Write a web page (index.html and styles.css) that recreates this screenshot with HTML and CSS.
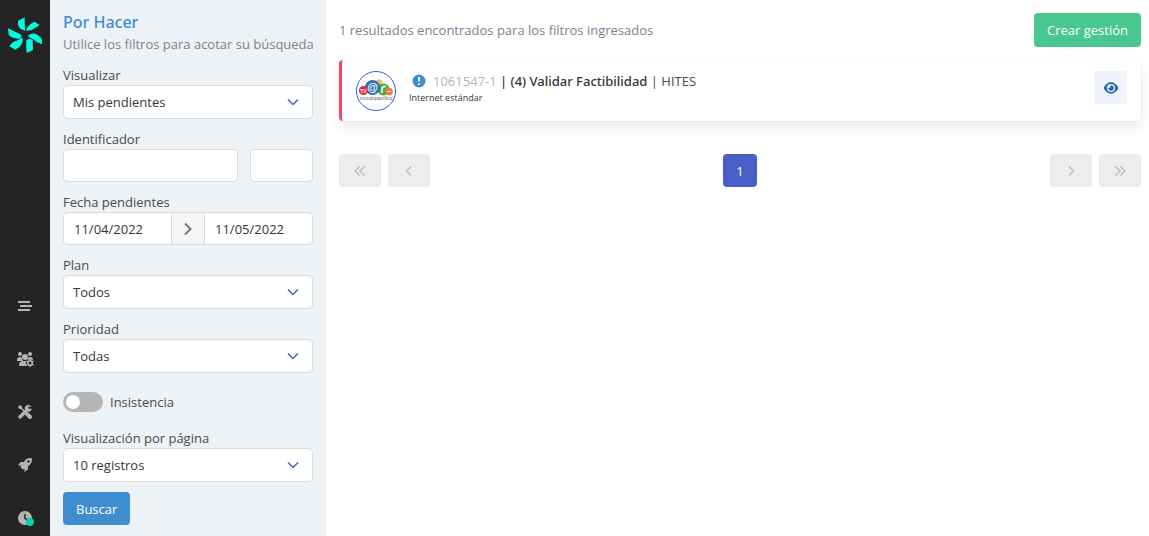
FILE: index.html
```html
<!DOCTYPE html>
<html lang="es">
<head>
    <meta charset="UTF-8">
    <meta name="viewport" content="width=device-width, initial-scale=1.0">
    <title>Por Hacer</title>
    <link rel="stylesheet" href="styles.css">
</head>
<body>
    <nav class="sidebar">
        <a href="#" class="brand" aria-label="Inicio">
            <svg viewBox="24 26 102 108" width="34" height="36" fill="#00fce0">
                <path d="M54 38 74 27 75 67 64 63Q52 56 54 38Z"/>
                <path d="M79 68Q79 52 103 40L119 50 95 65Q86 67 79 68Z"/>
                <path d="M83 83Q96 70 112 79 123 86 126 94V108L112 102Q101 92 90 88Z"/>
                <path d="M79 96Q88 89 98 95L99 125 80 134Q77 112 79 96Z"/>
                <path d="M67 87Q74 110 46 124L28 114Q35 101 50 97 61 93 67 87Z"/>
                <path d="M24 60 48 72Q62 76 65 84L60 91Q36 91 26 79Z"/>
            </svg>
        </a>
        <div class="menu">
            <a href="#" class="menu-item" aria-label="Lista">
                <svg viewBox="0 0 16 16" width="16" height="16" stroke="#b5b5b5" stroke-width="2">
                    <path d="M1 4h12M3 8h12M1 12h12"/>
                </svg>
            </a>
            <a href="#" class="menu-item" aria-label="Usuarios">
                <svg viewBox="0 0 18 16" width="18" height="16" fill="#b5b5b5">
                    <circle cx="4" cy="3" r="2"/>
                    <circle cx="14" cy="3" r="2"/>
                    <circle cx="9" cy="6" r="3"/>
                    <path d="M1 9Q1 6 4 6 5 6 6 7 6 9 7 10H1ZM17 9Q17 6 14 6 13 6 12 7 12 8 11 9 13 8 17 9ZM3 15Q3 10 7 10H10Q9 13 11 15Z"/>
                    <circle cx="14" cy="12" r="2.3" fill="none" stroke="#b5b5b5" stroke-width="1.6"/>
                    <path d="M13.3 8h1.4v2h-1.4zM13.3 14h1.4v2h-1.4zM10 10.6l.7-1.2 1.8 1-.7 1.2zM15.5 13.6l.7-1.2 1.8 1-.7 1.2zM10 13.4l1.8-1 .7 1.2-1.8 1zM15.5 10.4l1.8-1 .7 1.2-1.8 1z"/>
                </svg>
            </a>
            <a href="#" class="menu-item" aria-label="Herramientas">
                <svg viewBox="0 0 16 16" width="16" height="16" fill="none" stroke="#b5b5b5">
                    <path d="M3 13 10 6" stroke-width="3.4" stroke-linecap="round"/>
                    <path d="M13.9 2.6A3.2 3.2 0 1 0 14.4 4.9L12 5.2 11 4.2 11.4 2Z" fill="#b5b5b5" stroke-width=".6"/>
                    <path d="M1 3 3 1 5 2.5V4L7.8 6.8 6.8 7.8 4 5H2.5Z" fill="#b5b5b5" stroke="none"/>
                    <path d="M10.3 10.3 13 13" stroke-width="4" stroke-linecap="round"/>
                </svg>
            </a>
            <a href="#" class="menu-item" aria-label="Despegue">
                <svg viewBox="0 0 16 16" width="16" height="16">
                    <path d="M14.8 1.2Q9.5.4 6.8 5H4Q2.8 5.2 1 8.6L4.2 8.5 3.5 10.2 5.8 12.5 7.5 11.8 7.4 15Q10.8 13.2 11 12V9.2Q15.6 6.5 14.8 1.2Z" fill="#b5b5b5"/>
                    <circle cx="11.5" cy="4.5" r="1.2" fill="#242424"/>
                </svg>
            </a>
            <a href="#" class="menu-item" aria-label="Pendientes">
                <svg viewBox="0 0 16 16" width="16" height="16">
                    <circle cx="8" cy="8" r="7" fill="#b5b5b5"/>
                    <path d="M8 4v4.3l2.6 2" fill="none" stroke="#242424" stroke-width="1.5"/>
                </svg>
                <span class="menu-dot"></span>
            </a>
        </div>
    </nav>

    <form class="filters">
        <h1 class="filters-title">Por Hacer</h1>
        <p class="filters-subtitle">Utilice los filtros para acotar su búsqueda</p>

        <div class="field">
            <label for="visualizar">Visualizar</label>
            <div class="select">
                <select id="visualizar"><option>Mis pendientes</option></select>
                <svg class="chevron" viewBox="0 0 12 8" width="12" height="8"><path d="M1 1.5 6 6.5 11 1.5"/></svg>
            </div>
        </div>

        <div class="field">
            <label for="identificador">Identificador</label>
            <div class="id-group">
                <input type="text" class="input" id="identificador">
                <input type="text" class="input" aria-label="Dígito">
            </div>
        </div>

        <div class="field">
            <label for="desde">Fecha pendientes</label>
            <div class="date-group">
                <input type="text" class="input" id="desde" value="11/04/2022">
                <span class="date-arrow">
                    <svg viewBox="0 0 8 14" width="8" height="14"><path d="M1 1.5 6.5 7 1 12.5"/></svg>
                </span>
                <input type="text" class="input" aria-label="Hasta" value="11/05/2022">
            </div>
        </div>

        <div class="field">
            <label for="plan">Plan</label>
            <div class="select">
                <select id="plan"><option>Todos</option></select>
                <svg class="chevron" viewBox="0 0 12 8" width="12" height="8"><path d="M1 1.5 6 6.5 11 1.5"/></svg>
            </div>
        </div>

        <div class="field">
            <label for="prioridad">Prioridad</label>
            <div class="select">
                <select id="prioridad"><option>Todas</option></select>
                <svg class="chevron" viewBox="0 0 12 8" width="12" height="8"><path d="M1 1.5 6 6.5 11 1.5"/></svg>
            </div>
        </div>

        <div class="switch-field">
            <input type="checkbox" class="switch" id="insistencia">
            <label for="insistencia">Insistencia</label>
        </div>

        <div class="field">
            <label for="registros">Visualización por página</label>
            <div class="select">
                <select id="registros"><option>10 registros</option></select>
                <svg class="chevron" viewBox="0 0 12 8" width="12" height="8"><path d="M1 1.5 6 6.5 11 1.5"/></svg>
            </div>
        </div>

        <button type="button" class="btn btn-info">Buscar</button>
    </form>

    <main class="content">
        <div class="toolbar">
            <p class="results">1 resultados encontrados para los filtros ingresados</p>
            <button type="button" class="btn btn-success">Crear gestión</button>
        </div>

        <article class="card">
            <div class="avatar">
                <svg viewBox="0 0 38 38" width="38" height="38">
                    <circle cx="22" cy="11" r="3.6" fill="#f5bd62"/>
                    <circle cx="26.5" cy="17.5" r="6" fill="#43ad45"/>
                    <circle cx="15.5" cy="15.5" r="7.5" fill="#2670b8"/>
                    <circle cx="6.5" cy="18.5" r="4.6" fill="#e8283c"/>
                    <circle cx="32" cy="19.5" r="3.8" fill="#f0783a"/>
                    <g fill="#fff" font-family="Liberation Sans, sans-serif" font-weight="bold" text-anchor="middle">
                        <text x="6.5" y="20.5" font-size="5">TV</text>
                        <text x="15.5" y="19" font-size="11">@</text>
                    </g>
                    <path d="M25 21V17Q25.5 14 29 14.5" fill="none" stroke="#fff" stroke-width="1.6"/>
                    <path d="M30 19.5h4" stroke="#fff"/>
                    <text x="19" y="28" font-size="5" font-family="Liberation Sans, sans-serif" fill="#666" text-anchor="middle">mundopacífico</text>
                </svg>
            </div>
            <div class="card-body">
                <div class="card-title">
                    <svg class="alert-icon" viewBox="0 0 14 14" width="14" height="14">
                        <circle cx="7" cy="7" r="6.5" fill="#3e8ed0"/>
                        <path d="M7 3v4.5M7 9.2v1.8" stroke="#fff" stroke-width="1.7"/>
                    </svg>
                    <span><span class="card-id">1061547-1</span> <strong>| (4) Validar Factibilidad</strong> | HITES</span>
                </div>
                <div class="card-plan">Internet estándar</div>
            </div>
            <button type="button" class="btn btn-view" aria-label="Ver">
                <svg viewBox="0 0 16 14" width="16" height="14">
                    <path d="M.5 7Q3.5 1.3 8 1.3T15.5 7Q12.5 12.7 8 12.7T.5 7Z" fill="#2468b0"/>
                    <circle cx="8" cy="7" r="4" fill="#eff3fb"/>
                    <path d="M8 4.3A2.7 2.7 0 1 1 5.3 7Q7.8 7.5 8 4.3Z" fill="#2468b0"/>
                </svg>
            </button>
        </article>

        <nav class="pagination" aria-label="Paginación">
            <button type="button" class="page-btn" aria-label="Primera" disabled>
                <svg viewBox="0 0 12 12" width="12" height="12"><path d="M5.5 1.5 1 6 5.5 10.5M10.5 1.5 6 6 10.5 10.5"/></svg>
            </button>
            <button type="button" class="page-btn" aria-label="Anterior" disabled>
                <svg viewBox="0 0 12 12" width="12" height="12"><path d="M8 1.5 3.5 6 8 10.5"/></svg>
            </button>
            <button type="button" class="page-btn current">1</button>
            <button type="button" class="page-btn" aria-label="Siguiente" disabled>
                <svg viewBox="0 0 12 12" width="12" height="12"><path d="M4 1.5 8.5 6 4 10.5"/></svg>
            </button>
            <button type="button" class="page-btn" aria-label="Última" disabled>
                <svg viewBox="0 0 12 12" width="12" height="12"><path d="M1.5 1.5 6 6 1.5 10.5M6.5 1.5 11 6 6.5 10.5"/></svg>
            </button>
        </nav>
    </main>
</body>
</html>
```
FILE: styles.css
```css
:root {
    --dark: #242424;
    --panel: #edf2f7;
    --text: #4a4a4a;
    --text-strong: #363636;
    --muted: #7a8290;
    --border: #dbdbdb;
    --info: #3e8ed0;
    --link: #485fc7;
    --success: #48c78e;
    --danger: #f14668;
    --font: "Segoe UI", "Open Sans", sans-serif;
    --font-medium: "Segoe UI", "Noto Sans", sans-serif;
}

* {
    box-sizing: border-box;
    margin: 0;
    padding: 0;
}

body {
    display: flex;
    min-height: 100vh;
    background: #fff;
    color: var(--text);
    font-family: var(--font);
    font-size: 13px;
    line-height: 20px;
}

input,
select,
button {
    font: inherit;
    color: inherit;
}

svg {
    display: block;
    flex: none;
}

/* Sidebar */

.sidebar {
    display: flex;
    flex-direction: column;
    justify-content: space-between;
    align-items: center;
    flex: none;
    width: 50px;
    padding: 17px 0 10px;
    background: var(--dark);
}

.menu {
    display: flex;
    flex-direction: column;
    gap: 37px;
}

.menu-item {
    position: relative;
    display: flex;
    justify-content: center;
}

.menu-dot {
    position: absolute;
    right: 0;
    bottom: 0;
    width: 8px;
    height: 8px;
    border-radius: 50%;
    background: #00d1b2;
}

/* Filters */

.filters {
    flex: none;
    width: 276px;
    padding: 11px 13px;
    background: var(--panel);
}

.filters-title {
    color: var(--info);
    font-family: var(--font-medium);
    font-size: 16px;
    font-weight: 500;
    line-height: 23px;
}

.filters-subtitle {
    margin-bottom: 11px;
    color: var(--muted);
    white-space: nowrap;
}

.field {
    margin-bottom: 10px;
}

.field label {
    display: block;
}

.input,
.select select {
    width: 100%;
    height: 33px;
    padding: 0 10px;
    border: 1px solid var(--border);
    border-radius: 4px;
    background: #fff;
    color: var(--text-strong);
}

.select {
    display: grid;
    align-items: center;
}

.select select {
    grid-area: 1 / 1;
    height: 34px;
    padding: 0 9px;
    appearance: none;
}

.chevron {
    grid-area: 1 / 1;
    justify-self: end;
    margin-right: 14px;
    fill: none;
    stroke: var(--link);
    stroke-width: 1.5;
    pointer-events: none;
}

.id-group {
    display: grid;
    grid-template-columns: 175px 1fr;
    gap: 12px;
}

.date-group {
    display: flex;
}

.date-group .input {
    flex: 1;
    min-width: 0;
}

.date-group .input:first-child {
    border-radius: 4px 0 0 4px;
}

.date-group .input:last-child {
    border-radius: 0 4px 4px 0;
}

.date-arrow {
    display: flex;
    align-items: center;
    justify-content: center;
    width: 32px;
    border: solid var(--border);
    border-width: 1px 0;
    background: #f5f5f5;
}

.date-arrow path {
    fill: none;
    stroke: #7a7a7a;
    stroke-width: 2;
}

.switch-field {
    display: flex;
    align-items: center;
    gap: 7px;
    padding: 9px 0 16px;
}

.switch {
    display: flex;
    align-items: center;
    width: 40px;
    height: 20px;
    padding: 0 3px;
    border-radius: 10px;
    background: #b5b5b5;
    appearance: none;
}

.switch::before {
    content: "";
    width: 14px;
    height: 14px;
    border-radius: 50%;
    background: #fff;
}

.switch:checked {
    justify-content: flex-end;
    background: var(--info);
}

.btn {
    display: flex;
    align-items: center;
    justify-content: center;
    height: 33px;
    padding: 0 13px;
    border: none;
    border-radius: 4px;
    color: #fff;
    cursor: pointer;
}

.btn-info {
    background: var(--info);
}

.btn-success {
    height: 34px;
    background: var(--success);
}

.btn-view {
    width: 33px;
    padding: 0;
    background: #eff3fb;
}

/* Content */

.content {
    flex: 1;
    min-width: 0;
    padding: 13px 8px 13px 13px;
}

.toolbar {
    display: flex;
    align-items: center;
    justify-content: space-between;
    margin-bottom: 13px;
}

.results {
    color: var(--muted);
}

.card {
    display: flex;
    align-items: flex-start;
    padding: 11px 14px 10px;
    border-left: 3px solid var(--danger);
    border-radius: 4px;
    box-shadow: 0 7px 14px rgba(10, 10, 10, 0.08), 0 0 0 1px rgba(10, 10, 10, 0.02);
}

.avatar {
    display: flex;
    align-items: center;
    justify-content: center;
    flex: none;
    width: 40px;
    height: 40px;
    border: 1px solid #2f5fde;
    border-radius: 50%;
}

.card-body {
    flex: 1;
    margin-left: 13px;
}

.card-title {
    display: flex;
    align-items: center;
    gap: 7px;
    padding-left: 3px;
}

.card-title strong {
    color: var(--text-strong);
    font-family: var(--font-medium);
    font-weight: 500;
}

.card-id {
    color: #b5b5b5;
}

.card-plan {
    color: var(--text-strong);
    font-size: 9px;
    line-height: 14px;
}

.pagination {
    display: flex;
    gap: 7px;
    margin-top: 33px;
}

.page-btn {
    display: flex;
    align-items: center;
    justify-content: center;
    width: 42px;
    height: 33px;
    border: none;
    border-radius: 4px;
    background: #ededed;
}

.page-btn path {
    fill: none;
    stroke: #bdbdbd;
    stroke-width: 1.5;
}

.page-btn.current {
    width: 34px;
    margin: 0 auto;
    background: var(--link);
    color: #fff;
}
```
